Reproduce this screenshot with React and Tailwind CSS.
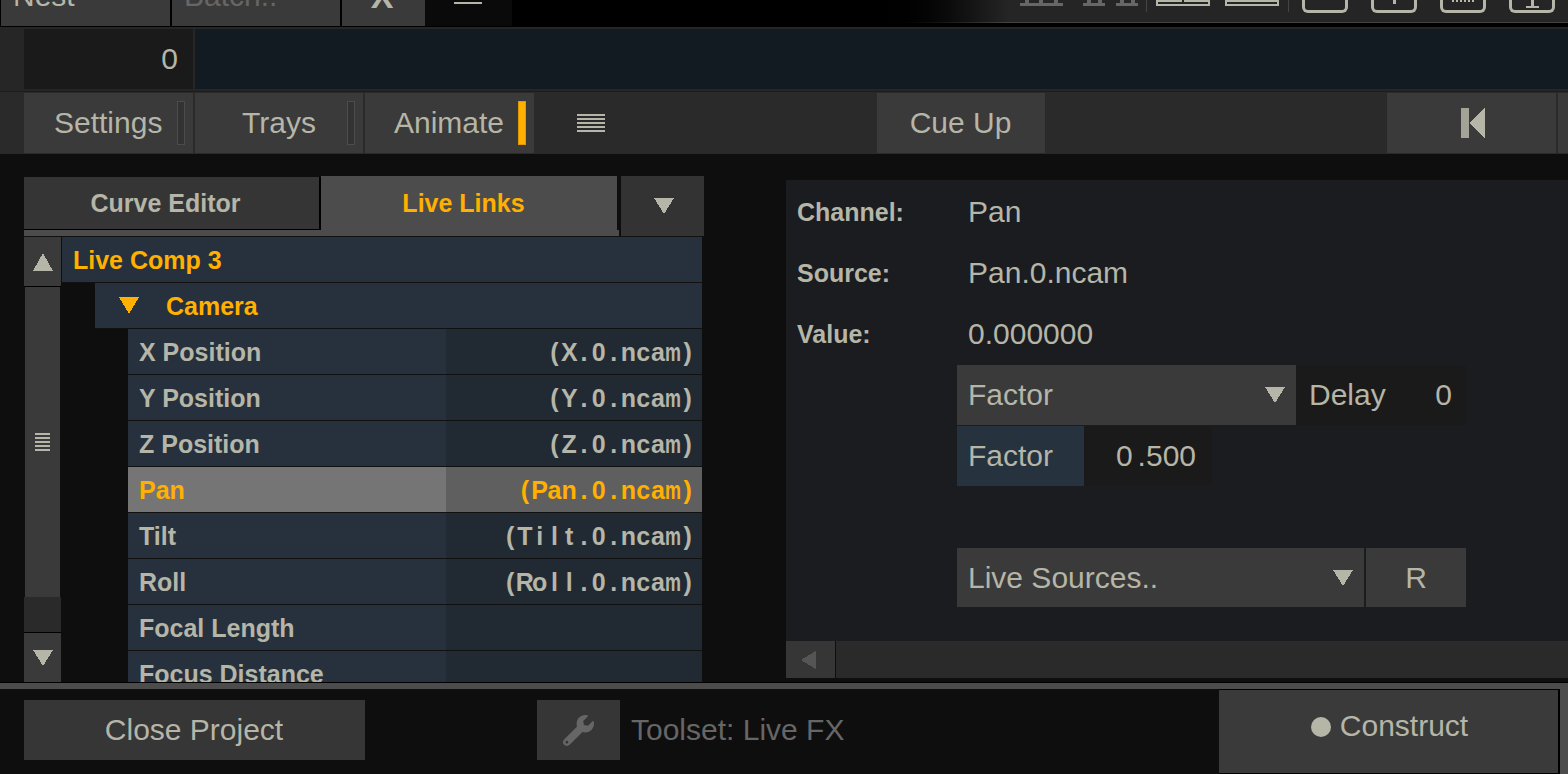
import React from "react";
import { FaWrench } from "react-icons/fa";

const Tri = ({ dir = "down", color = "#b5b5a8", w = 20, h = 16 }) => {
  const pts = { down: `0,0 ${w},0 ${w / 2},${h}`, up: `0,${h} ${w},${h} ${w / 2},0`, left: `${w},0 ${w},${h} 0,${h / 2}` }[dir];
  return (
    <svg width={w} height={h} className="block shrink-0" shapeRendering="crispEdges">
      <polygon points={pts} fill={color} />
    </svg>
  );
};

const Lines = ({ w, n, gap = 2, t = 2, color = "bg-[#b5b5a8]" }) => (
  <div className="flex flex-col" style={{ width: w, gap }}>
    {Array.from({ length: n }).map((_, i) => (
      <div key={i} className={color} style={{ height: t }} />
    ))}
  </div>
);

const Sep = ({ ml }) => <div className="w-px h-[12px] bg-[#444] shrink-0" style={{ marginLeft: ml }} />;

const Box = ({ ml, children }) => (
  <div
    className="w-[46px] h-[13px] border-[3px] border-t-0 border-[#b5b5a8] rounded-b-[6px] shrink-0 flex flex-col items-center"
    style={{ marginLeft: ml }}
  >
    {children}
  </div>
);

const Wide = ({ ml, children }) => (
  <div className="w-[54px] h-[6px] border-2 border-t-0 border-[#b5b5a8] shrink-0 flex gap-[2px] bg-[#252525]" style={{ marginLeft: ml }}>
    {children}
  </div>
);

const Comb = ({ ml, w }) => (
  <div className="shrink-0 flex flex-col" style={{ marginLeft: ml, width: w }}>
    <div className="flex justify-around h-[3px]">
      <div className="w-[4px] bg-[#666]" />
      <div className="w-[4px] bg-[#666]" />
      {w > 30 && <div className="w-[4px] bg-[#666]" />}
    </div>
    <div className="h-[3px] bg-[#666]" />
  </div>
);

const TabBtn = ({ w, children, className = "" }) => (
  <div className={`flex items-center justify-center bg-[#3a3a3a] h-[60px] shrink-0 ${className}`} style={{ width: w }}>
    {children}
  </div>
);

const Fixed = ({ children }) => (
  <span className="flex">
    {[...children].map((c, i) => (
      <span key={i} className="w-[14.8px] flex justify-center shrink-0">
        <span className={c === "m" ? "inline-block scale-x-[0.72]" : "inline-block"}>{c}</span>
      </span>
    ))}
  </span>
);

const rows = [
  ["X Position", "(X.0.ncam)"],
  ["Y Position", "(Y.0.ncam)"],
  ["Z Position", "(Z.0.ncam)"],
  ["Pan", "(Pan.0.ncam)", true],
  ["Tilt", "(Tilt.0.ncam)"],
  ["Roll", "(Roll.0.ncam)"],
  ["Focal Length", ""],
  ["Focus Distance", ""],
];

export default function App() {
  return (
    <div className="w-[1568px] h-[774px] overflow-hidden flex flex-col bg-[#0e0e0e] text-[#b5b5a8] font-['Liberation_Sans',Arial,sans-serif] text-[30px] leading-none">
      {/* top bar */}
      <div className="h-[27px] shrink-0 bg-black flex overflow-hidden">
        <div className="flex h-[26px] items-end pl-px gap-[2px] shrink-0">
          <div className="w-[169px] h-[60px] shrink-0 bg-[#3a3a3a] flex items-center pl-[12px]">Nest</div>
          <div className="w-[168px] h-[60px] shrink-0 bg-[#3a3a3a] flex items-center pl-[12px] text-[#666]">Batch..</div>
          <div className="w-[83px] h-[60px] shrink-0 bg-[#3a3a3a] flex items-center justify-center font-bold text-[34px] pr-[3px]">X</div>
        </div>
        <div className="w-[87px] h-[26px] bg-[#0a0a0a] shrink-0 flex justify-center pr-[1px] pt-[2px]">
          <div className="w-[28px] h-[2px] bg-[#b5b5a8]" />
        </div>
        <div className="flex-1 flex flex-col">
          <div className="h-[22px] flex items-start bg-gradient-to-r from-[#000000] from-[34%] to-[#252525] to-[47%] pl-[508px]">
            <Comb ml={0} w={43} />
            <Comb ml={20} w={22} />
            <Comb ml={11} w={22} />
            <Sep ml={8} />
            <Wide ml={9}>
              <div className="flex-1 bg-[#b5b5a8] h-[2px]" />
              <div className="flex-1 bg-[#b5b5a8] h-[2px]" />
            </Wide>
            <Wide ml={15}>
              <div className="flex-1 bg-[#b5b5a8] h-[2px]" />
            </Wide>
            <Sep ml={9} />
            <Box ml={13} />
            <Box ml={23}>
              <div className="w-[3px] h-[4px] bg-[#b5b5a8]" />
            </Box>
            <Box ml={23}>
              <div className="w-[22px] h-[2px] border-t-2 border-dotted border-[#b5b5a8]" />
            </Box>
            <Box ml={23}>
              <div className="w-[3px] h-[6px] bg-[#b5b5a8]" />
              <div className="w-[13px] h-[2px] bg-[#b5b5a8]" />
            </Box>
          </div>
          <div className="h-px bg-gradient-to-r from-[#000000] from-[34%] to-[#444444] to-[47%]" />
        </div>
      </div>

      {/* row 2 */}
      <div className="h-[65px] shrink-0 bg-[#262626] pt-[2px] pl-[24px] flex gap-[2px] items-start border-b border-[#1c1c1c]">
        <div className="w-[169px] h-[60px] bg-[#1a1a1a] flex items-center justify-end pr-[15px] shrink-0">0</div>
        <div className="flex-1 h-[60px] bg-[#131b22]" />
      </div>

      {/* row 3 */}
      <div className="h-[62px] shrink-0 bg-[#2a2a2a] pl-[24px] flex items-start pt-px">
        {[
          ["Settings", 169, "pl-[30px]", false],
          ["Trays", 168, "pl-[47px]", false],
          ["Animate", 169, "pl-[29px]", true],
        ].map(([t, w, p, on], i) => (
          <div key={t} className={`h-[60px] bg-[#3a3a3a] flex items-center shrink-0 ${i < 2 ? "mr-[2px]" : ""} ${p}`} style={{ width: w }}>
            <span className="flex-1">{t}</span>
            <div className={`w-[8px] h-[44px] mr-[8px] border ${on ? "bg-[#ffb000] border-[#e09a00]" : "bg-[#333333] border-[#4c4c4c]"}`} />
          </div>
        ))}
        <div className="ml-[43px] h-[60px] flex items-center shrink-0">
          <Lines w={28} n={5} />
        </div>
        <TabBtn w={168} className="ml-[272px] pr-[1px]">Cue Up</TabBtn>
        <div className="w-[342px] shrink-0" />
        <TabBtn w={169} className="pl-[3px]">
          <svg width="24" height="32" className="block" shapeRendering="crispEdges">
            <rect x="0" y="1" width="8" height="30" fill="#a3a397" />
            <polygon points="8,16 24,0 24,32" fill="#b5b5a8" />
          </svg>
        </TabBtn>
        <div className="ml-[2px] flex-1 h-[60px] bg-[#3a3a3a]" />
      </div>

      {/* body */}
      <div className="flex-1 min-h-0 flex overflow-hidden">
        {/* left */}
        <div className="w-[680px] ml-[24px] shrink-0 pt-[22px] flex flex-col min-h-0">
          <div className="flex h-[60px] shrink-0 text-[25px] font-bold">
            <div className="w-[297px] shrink-0 flex flex-col pt-px">
              <div className="h-[53px] bg-[#353535] border-r-2 border-b border-black flex items-center justify-center pr-[12px] pt-[1px]">Curve Editor</div>
              <div className="h-[6px] bg-[#4c4c4c]" />
            </div>
            <div className="w-[298px] shrink-0 flex flex-col">
              <div className="h-[54px] flex">
                <div className="w-[296px] bg-[#4c4c4c] flex items-center justify-center text-[#ffb000] pr-[11px] pt-[1px]">Live Links</div>
              </div>
              <div className="h-[6px] bg-[#4c4c4c]" />
            </div>
            <div className="w-[2px] shrink-0" />
            <div className="w-[83px] shrink-0 bg-[#333333] flex items-center justify-center pb-[1px] pl-[2px]">
              <Tri />
            </div>
          </div>
          <div className="h-px bg-[#111] shrink-0 w-[678px]" />
          <div className="flex-1 min-h-0 flex overflow-hidden">
            <div className="w-[37px] shrink-0 flex flex-col">
              <div className="h-[49px] bg-[#3a3a3a] border-b border-black flex items-center justify-center shrink-0 box-content">
                <Tri dir="up" h={18} />
              </div>
              <div className="h-[310px] bg-[#3a3a3a] mx-px flex items-center justify-center shrink-0">
                <Lines w={15} n={5} gap={2} t={2} />
              </div>
              <div className="h-[35px] bg-[#2a2a2a] border-b border-black shrink-0 box-content" />
              <div className="flex-1 bg-[#3a3a3a] flex justify-center pt-[17px]">
                <Tri />
              </div>
            </div>
            <div className="w-[640px] ml-px shrink-0 flex flex-col text-[25px] font-bold">
              <div className="h-[46px] shrink-0 bg-[#26313d] border-b border-[#111] flex items-center pl-[11px] text-[#ffb000]">
                <span className="pt-[1px]">Live Comp 3</span>
              </div>
              <div className="h-[46px] shrink-0 ml-[33px] bg-[#26313d] border-b border-[#111] flex items-center text-[#ffb000]">
                <div className="ml-[24px] mr-[27px]">
                  <Tri color="#ffb000" h={17} />
                </div>
                <span className="pt-[1px]">Camera</span>
              </div>
              {rows.map(([a, b, sel]) => (
                <div key={a} className="h-[46px] shrink-0 ml-[66px] border-b border-[#111] flex">
                  <div className={`w-[318px] shrink-0 flex items-center pl-[11px] pt-[1px] ${sel ? "bg-[#757575] text-[#ffb000]" : "bg-[#26313d]"}`}>{a}</div>
                  <div className={`flex-1 flex items-center justify-end pr-[7px] pt-[1px] ${sel ? "bg-[#5f5f5f] text-[#ffb000]" : "bg-[#212a33]"}`}>
                    <Fixed>{b}</Fixed>
                  </div>
                </div>
              ))}
            </div>
          </div>
        </div>

        {/* right */}
        <div className="ml-[82px] flex-1 mt-[26px] flex flex-col min-w-0 self-start">
          <div className="h-[461px] bg-[#1a1c20] pt-px">
            {[
              ["Channel:", "Pan"],
              ["Source:", "Pan.0.ncam"],
              ["Value:", "0.000000"],
            ].map(([l, v]) => (
              <div key={l} className="h-[61px] flex items-center">
                <div className="w-[182px] pl-[11px] pt-[1px] text-[25px] font-bold">{l}</div>
                <div>{v}</div>
              </div>
            ))}
            <div className="ml-[171px] mt-px flex">
              <div className="w-[339px] h-[60px] bg-[#3a3a3a] flex items-center pl-[11px] pr-[11px] justify-between">
                <span>Factor</span>
                <Tri />
              </div>
              <div className="w-[170px] h-[60px] bg-[#1a1a1a] flex items-center pl-[13px] pr-[14px] justify-between">
                <span>Delay</span>
                <span>0</span>
              </div>
            </div>
            <div className="ml-[171px] mt-px flex">
              <div className="w-[127px] h-[60px] bg-[#26323e] flex items-center pl-[11px]">Factor</div>
              <div className="w-[128px] h-[60px] bg-[#1a1a1a] flex items-center justify-end pr-[16px] whitespace-pre">0<span className="ml-[5px]">.500</span></div>
            </div>
            <div className="ml-[171px] mt-[62px] flex gap-[2px]">
              <div className="w-[407px] h-[59px] bg-[#3a3a3a] flex items-center pl-[11px] pr-[11px] justify-between">
                <span>Live Sources..</span>
                <Tri />
              </div>
              <div className="w-[100px] h-[59px] bg-[#3a3a3a] flex items-center justify-center">R</div>
            </div>
          </div>
          <div className="h-[37px] flex">
            <div className="w-[49px] bg-[#363636] flex items-center justify-center pr-[5px]">
              <Tri dir="left" color="#555555" w={15} h={18} />
            </div>
            <div className="flex-1 ml-px bg-[#2a2a2a]" />
          </div>
        </div>
      </div>

      {/* footer */}
      <div className="h-[92px] shrink-0 flex flex-col">
        <div className="h-px bg-black shrink-0" />
        <div className="h-[6px] bg-[#4c4c4c] shrink-0" />
        <div className="flex-1 flex min-h-0">
          <div className="w-[1219px] shrink-0 flex items-start pt-[11px] pl-[24px]">
            <div className="w-[341px] h-[60px] bg-[#363636] flex items-center justify-center shrink-0 pr-[1px]">Close Project</div>
            <div className="w-[83px] h-[60px] ml-[172px] bg-[#363636] flex items-center justify-center shrink-0 text-[#666666]">
              <FaWrench size={31} />
            </div>
            <div className="ml-[11px] h-[60px] flex items-center text-[#666666]">Toolset: Live FX</div>
          </div>
          <div className="w-[341px] shrink-0 bg-[#3a3a3a] border-t border-r-2 border-b border-black flex items-start justify-center pt-[21px] pl-[2px] gap-[9px]">
            <div className="w-[20px] h-[20px] rounded-full bg-[#b5b5a8] mt-[6px]" />
            <span>Construct</span>
          </div>
          <div className="flex-1 bg-[#4c4c4c]" />
        </div>
      </div>
    </div>
  );
}
